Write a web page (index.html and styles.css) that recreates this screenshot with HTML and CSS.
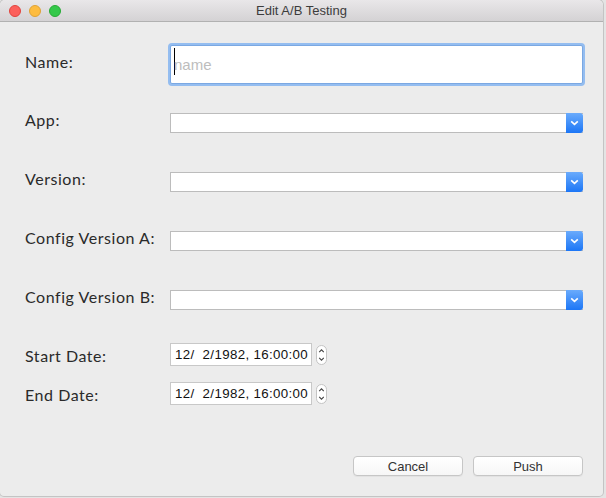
FILE: index.html
```html
<!DOCTYPE html>
<html>
<head>
<meta charset="utf-8">
<title>Edit A/B Testing</title>
<link rel="stylesheet" href="styles.css">
</head>
<body>
<div class="window">
  <div class="titlebar">
    <div class="lights">
      <span class="light red"></span>
      <span class="light yellow"></span>
      <span class="light green"></span>
    </div>
    <div class="title">Edit A/B Testing</div>
  </div>
  <div class="content">
    <div class="row row-name">
      <label class="label">Name:</label>
      <div class="textfield"><span class="caret"></span><span class="placeholder">name</span></div>
    </div>
    <div class="row row-select first-select">
      <label class="label">App:</label>
      <div class="select"><div class="select-btn"><svg width="9" height="6" viewBox="0 0 9 6"><path d="M1.2 1.3 L4.5 4.4 L7.8 1.3" fill="none" stroke="#fff" stroke-width="1.6"/></svg></div></div>
    </div>
    <div class="row row-select">
      <label class="label">Version:</label>
      <div class="select"><div class="select-btn"><svg width="9" height="6" viewBox="0 0 9 6"><path d="M1.2 1.3 L4.5 4.4 L7.8 1.3" fill="none" stroke="#fff" stroke-width="1.6"/></svg></div></div>
    </div>
    <div class="row row-select">
      <label class="label">Config Version A:</label>
      <div class="select"><div class="select-btn"><svg width="9" height="6" viewBox="0 0 9 6"><path d="M1.2 1.3 L4.5 4.4 L7.8 1.3" fill="none" stroke="#fff" stroke-width="1.6"/></svg></div></div>
    </div>
    <div class="row row-select">
      <label class="label">Config Version B:</label>
      <div class="select"><div class="select-btn"><svg width="9" height="6" viewBox="0 0 9 6"><path d="M1.2 1.3 L4.5 4.4 L7.8 1.3" fill="none" stroke="#fff" stroke-width="1.6"/></svg></div></div>
    </div>
    <div class="row row-date first-date">
      <label class="label">Start Date:</label>
      <div class="datefield">12/&nbsp; 2/1982, 16:00:00</div>
      <div class="stepper"><svg width="11" height="20" viewBox="0 0 11 20"><path d="M3.2 7.2 L5.5 4.8 L7.8 7.2 M3.2 12.8 L5.5 15.2 L7.8 12.8" fill="none" stroke="#444" stroke-width="1.1"/></svg></div>
    </div>
    <div class="row row-date second-date">
      <label class="label">End Date:</label>
      <div class="datefield">12/&nbsp; 2/1982, 16:00:00</div>
      <div class="stepper"><svg width="11" height="20" viewBox="0 0 11 20"><path d="M3.2 7.2 L5.5 4.8 L7.8 7.2 M3.2 12.8 L5.5 15.2 L7.8 12.8" fill="none" stroke="#444" stroke-width="1.1"/></svg></div>
    </div>
    <div class="buttons">
      <button class="btn">Cancel</button>
      <button class="btn">Push</button>
    </div>
  </div>
</div>
</body>
</html>
```
FILE: styles.css
```css
html, body {
  margin: 0;
  padding: 0;
}
body {
  background: #e4e4e4;
  width: 606px;
  height: 498px;
  overflow: hidden;
}
.window {
  width: 603px;
  height: 496px;
  background: #ececec;
  border-radius: 5px 5px 4px 4px;
  overflow: hidden;
  box-shadow: 0 0 0 1px #c4c4c4;
  display: flex;
  flex-direction: column;
}
.titlebar {
  height: 21px;
  flex: none;
  background: linear-gradient(#e9e7e9, #d4d2d4);
  border-bottom: 1px solid #b1b1b1;
  display: flex;
  align-items: center;
  position: relative;
}
.lights {
  display: flex;
  gap: 8px;
  padding-left: 9px;
  padding-top: 1px;
}
.light {
  width: 12px;
  height: 12px;
  border-radius: 50%;
  box-sizing: border-box;
}
.red { background: #fc605c; border: 1px solid #e0443e; }
.yellow { background: #fdbc40; border: 1px solid #dea236; }
.green { background: #34c84a; border: 1px solid #27aa35; }
.title {
  position: absolute;
  left: 0;
  right: 0;
  top: 3px;
  text-align: center;
  font-family: "Liberation Sans", Arial, sans-serif;
  font-size: 13px;
  color: #3c3c3c;
}
.content {
  padding: 0 20px 0 25px;
  display: flex;
  flex-direction: column;
  flex: 1;
}
.row {
  display: flex;
  align-items: center;
}
.label {
  width: 145px;
  flex: none;
  font-family: "Lato", "Noto Sans", sans-serif;
  font-size: 16px;
  letter-spacing: 0.55px;
  color: #2a2a2a;
  white-space: nowrap;
}
.row-name {
  margin-top: 23px;
  height: 39px;
}
.row-name .label {
  padding-bottom: 7px;
}
.textfield {
  width: 413px;
  height: 39px;
  box-sizing: border-box;
  background: #fff;
  border: 1px solid #7ba8e2;
  box-shadow: 0 0 0 2px #94bdf0;
  border-radius: 2px;
  display: flex;
  align-items: center;
  padding-left: 3px;
  position: relative;
}
.caret {
  width: 1px;
  height: 27px;
  background: #000;
  margin-right: -1px;
  margin-top: -6px;
}
.placeholder {
  font-family: "Liberation Sans", Arial, sans-serif;
  font-size: 15px;
  color: #bdbdbd;
  margin-top: -1px;
}
.row-select {
  margin-top: 39px;
  height: 20px;
}
.first-select {
  margin-top: 29px;
}
.row-select .label {
  padding-bottom: 7px;
}
.select {
  width: 413px;
  height: 20px;
  box-sizing: border-box;
  background: #fff;
  border: 1px solid #bcbcbc;
  border-right: none;
  display: flex;
  justify-content: flex-end;
}
.select-btn {
  width: 17px;
  height: 20px;
  margin-top: -1px;
  margin-bottom: -1px;
  background: linear-gradient(#6aabfc, #1c76f6);
  border-radius: 0 3px 3px 0;
  display: flex;
  align-items: center;
  justify-content: center;
}
.row-date {
  height: 23px;
}
.first-date {
  margin-top: 33px;
}
.second-date {
  margin-top: 16px;
}
.row-date .label {
  padding-top: 1px;
}
.datefield {
  width: 142px;
  height: 23px;
  box-sizing: border-box;
  background: #fff;
  border: 1px solid #c8c8c8;
  font-family: "Liberation Sans", Arial, sans-serif;
  font-size: 13.3px;
  letter-spacing: 0.35px;
  color: #111;
  display: flex;
  align-items: center;
  padding-left: 4px;
  white-space: nowrap;
  overflow: hidden;
}
.stepper {
  width: 11px;
  height: 20px;
  margin-left: 4px;
  box-sizing: border-box;
  border: 1px solid #c4c4c4;
  border-radius: 6px;
  background: #fff;
  display: flex;
  align-items: center;
  justify-content: center;
  overflow: hidden;
}
.stepper svg {
  flex: none;
}
.buttons {
  margin-top: 51px;
  display: flex;
  justify-content: flex-end;
  gap: 10px;
}
.btn {
  width: 110px;
  height: 20px;
  box-sizing: border-box;
  border: 1px solid #c6c6c6;
  border-radius: 4px;
  background: linear-gradient(#ffffff, #f6f6f6);
  font-family: "Liberation Sans", Arial, sans-serif;
  font-size: 13px;
  color: #333;
  padding: 0;
  box-shadow: 0 1px 0 rgba(0,0,0,0.04);
}
```
